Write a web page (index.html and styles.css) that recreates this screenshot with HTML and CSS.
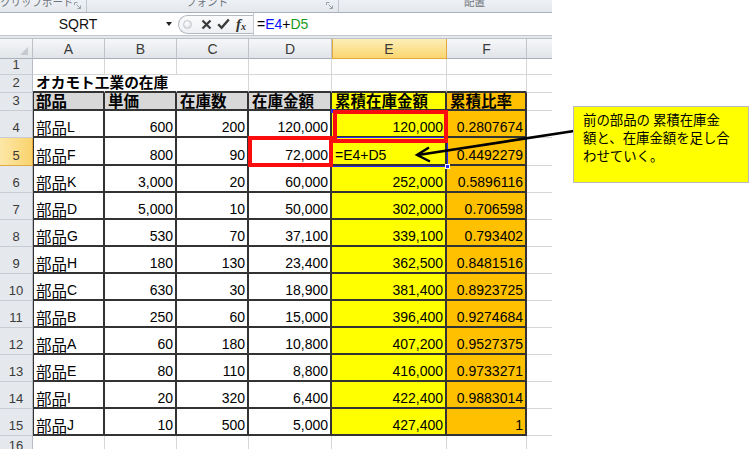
FILE: index.html
```html
<!DOCTYPE html>
<html lang="ja">
<head>
<meta charset="utf-8">
<title>在庫</title>
<link rel="stylesheet" href="styles.css">
</head>
<body>
<div class="page">
  <div class="excel">
    <div class="ribbon">
      <div class="group g1"><span class="glabel">クリップボード</span><span class="launch"><svg width="7" height="7" viewBox="0 0 7 7"><path d="M0.5 3V0.5H3.5M6.5 6.5L2.5 2.5M6.5 3.5V6.5H3.5" stroke="#9aa0a8" stroke-width="1" fill="none"/></svg></span></div>
      <div class="group g2"><span class="glabel">フォント</span><span class="launch"><svg width="7" height="7" viewBox="0 0 7 7"><path d="M0.5 3V0.5H3.5M6.5 6.5L2.5 2.5M6.5 3.5V6.5H3.5" stroke="#9aa0a8" stroke-width="1" fill="none"/></svg></span></div>
      <div class="group g3"><span class="glabel">配置</span></div>
    </div>
    <div class="fbar">
      <div class="namebox"><span class="nbtext">SQRT</span><span class="nbarrow"></span></div>
      <div class="fxarea">
        <div class="pill">
          <span class="knob"></span>
          <svg class="ico" width="11" height="11" viewBox="0 0 11 11"><path d="M1.5 1.5L9.5 9.5M9.5 1.5L1.5 9.5" stroke="#3a3a3a" stroke-width="2.2"/></svg>
          <svg class="ico" width="13" height="12" viewBox="0 0 13 12"><path d="M1.2 6.2L4.6 9.8L11.8 1.5" stroke="#3a3a3a" stroke-width="2.4" fill="none"/></svg>
          <span class="fx">f<span class="fxx">x</span></span>
        </div>
      </div>
      <div class="formula">=<span class="ref-b">E4</span>+<span class="ref-g">D5</span></div>
    </div>
    <div class="fgap"></div>
    <div class="sheet">
      <div class="corner"><span class="tri"></span></div>
      <div class="ch">A</div><div class="ch">B</div><div class="ch">C</div><div class="ch">D</div><div class="ch sel">E</div><div class="ch">F</div><div class="ch last"></div>

      <div class="rh">1</div>
      <div class="c"></div><div class="c"></div><div class="c"></div><div class="c"></div><div class="c"></div><div class="c"></div><div class="c g"></div>

      <div class="rh">2</div>
      <div class="c ab nr"><span class="j b title">オカモト工業の在庫</span></div><div class="c ab nr"></div><div class="c ab"></div><div class="c ab"></div><div class="c ab"></div><div class="c ab"></div><div class="c g"></div>

      <div class="rh">3</div>
      <div class="c t ta gray"><span class="j b">部品</span></div><div class="c t gray"><span class="j b">単価</span></div><div class="c t gray"><span class="j b">在庫数</span></div><div class="c t gray"><span class="j b">在庫金額</span></div><div class="c t y"><span class="j b">累積在庫金額</span></div><div class="c t o"><span class="j b">累積比率</span></div><div class="c g"></div>

      <div class="rh">4</div>
      <div class="c t ta"><span class="j">部品</span>L</div><div class="c t r">600</div><div class="c t r">200</div><div class="c t r">120,000</div><div class="c t r y">120,000</div><div class="c t r o">0.2807674</div><div class="c g"></div>

      <div class="rh sel">5</div>
      <div class="c t ta"><span class="j">部品</span>F</div><div class="c t r">800</div><div class="c t r">90</div><div class="c t r">72,000</div><div class="c t y">=E4+D5</div><div class="c t r o">0.4492279</div><div class="c g"></div>

      <div class="rh">6</div>
      <div class="c t ta"><span class="j">部品</span>K</div><div class="c t r">3,000</div><div class="c t r">20</div><div class="c t r">60,000</div><div class="c t r y">252,000</div><div class="c t r o">0.5896116</div><div class="c g"></div>

      <div class="rh">7</div>
      <div class="c t ta"><span class="j">部品</span>D</div><div class="c t r">5,000</div><div class="c t r">10</div><div class="c t r">50,000</div><div class="c t r y">302,000</div><div class="c t r o">0.706598</div><div class="c g"></div>

      <div class="rh">8</div>
      <div class="c t ta"><span class="j">部品</span>G</div><div class="c t r">530</div><div class="c t r">70</div><div class="c t r">37,100</div><div class="c t r y">339,100</div><div class="c t r o">0.793402</div><div class="c g"></div>

      <div class="rh">9</div>
      <div class="c t ta"><span class="j">部品</span>H</div><div class="c t r">180</div><div class="c t r">130</div><div class="c t r">23,400</div><div class="c t r y">362,500</div><div class="c t r o">0.8481516</div><div class="c g"></div>

      <div class="rh">10</div>
      <div class="c t ta"><span class="j">部品</span>C</div><div class="c t r">630</div><div class="c t r">30</div><div class="c t r">18,900</div><div class="c t r y">381,400</div><div class="c t r o">0.8923725</div><div class="c g"></div>

      <div class="rh">11</div>
      <div class="c t ta"><span class="j">部品</span>B</div><div class="c t r">250</div><div class="c t r">60</div><div class="c t r">15,000</div><div class="c t r y">396,400</div><div class="c t r o">0.9274684</div><div class="c g"></div>

      <div class="rh">12</div>
      <div class="c t ta"><span class="j">部品</span>A</div><div class="c t r">60</div><div class="c t r">180</div><div class="c t r">10,800</div><div class="c t r y">407,200</div><div class="c t r o">0.9527375</div><div class="c g"></div>

      <div class="rh">13</div>
      <div class="c t ta"><span class="j">部品</span>E</div><div class="c t r">80</div><div class="c t r">110</div><div class="c t r">8,800</div><div class="c t r y">416,000</div><div class="c t r o">0.9733271</div><div class="c g"></div>

      <div class="rh">14</div>
      <div class="c t ta"><span class="j">部品</span>I</div><div class="c t r">20</div><div class="c t r">320</div><div class="c t r">6,400</div><div class="c t r y">422,400</div><div class="c t r o">0.9883014</div><div class="c g"></div>

      <div class="rh">15</div>
      <div class="c t ta"><span class="j">部品</span>J</div><div class="c t r">10</div><div class="c t r">500</div><div class="c t r">5,000</div><div class="c t r y">427,400</div><div class="c t r o">1</div><div class="c g"></div>

      <div class="rh">16</div>
      <div class="c"></div><div class="c"></div><div class="c"></div><div class="c"></div><div class="c"></div><div class="c"></div><div class="c g"></div>

      <div class="hl-blue-e4"><span class="dot dot-tl"></span></div>
      <div class="hl-blue-e5"><span class="handle"></span></div>
      <div class="hl-green-d5"></div>
      <div class="redbox red-e4"></div>
      <div class="redbox red-d5"></div>
    </div>
  </div>

  <svg class="arrow" width="750" height="449" viewBox="0 0 750 449">
    <path d="M574 131L418 155" stroke="#000" stroke-width="2.6" fill="none"/>
    <path d="M429 147.5L417 155L430 161.5" stroke="#000" stroke-width="2.4" fill="none" stroke-linejoin="miter"/>
  </svg>

  <div class="callout">前の部品の 累積在庫金<br>額と、在庫金額を足し合<br>わせていく。</div>
</div>
</body>
</html>
```

FILE: styles.css
```css
* { box-sizing: border-box; }

body {
  margin: 0;
  background: #ffffff;
  font-family: "Liberation Sans", "Noto Sans CJK JP", sans-serif;
  color: #000;
}

.page {
  position: relative;
  width: 750px;
  height: 449px;
  overflow: hidden;
}

.excel {
  width: 552px;
}

/* ribbon strip */
.ribbon {
  display: flex;
  height: 13px;
  background: linear-gradient(#edf0f4, #e4e8ed);
  border-bottom: 1px solid #a9b0b9;
  overflow: hidden;
}

.group {
  display: flex;
  align-items: flex-start;
  border-right: 1px solid #c2c7ce;
  height: 12px;
}

.g1 { width: 87px; padding-left: 0; }
.g2 { width: 252px; padding-left: 99px; }
.g3 { width: 213px; padding-left: 125px; border-right: none; }

.glabel {
  font-family: "Noto Sans CJK JP", sans-serif;
  font-size: 10.5px;
  line-height: 12px;
  margin-top: -4px;
  color: #6f757c;
  white-space: nowrap;
}

.launch {
  margin-left: auto;
  margin-right: 5px;
  margin-top: 2px;
  display: flex;
}

/* formula bar */
.fbar {
  display: flex;
  height: 23px;
  background: #ffffff;
  border-bottom: 1px solid #c3c8cf;
}

.namebox {
  width: 175px;
  display: flex;
  align-items: center;
}

.nbtext {
  width: 156px;
  text-align: center;
  font-size: 14px;
  color: #111;
}

.nbarrow {
  margin-left: 10px;
  width: 0;
  height: 0;
  border-left: 3px solid transparent;
  border-right: 3px solid transparent;
  border-top: 4px solid #222;
}

.fxarea {
  width: 78px;
  display: flex;
  align-items: center;
  padding-left: 3px;
}

.pill {
  flex: 1;
  height: 19px;
  display: flex;
  align-items: center;
  border: 1px solid #b3b9c2;
  border-right: none;
  border-radius: 10px 0 0 10px;
  background: linear-gradient(#fbfbfc, #eef0f3);
  padding-left: 4px;
}

.knob {
  width: 9px;
  height: 9px;
  border-radius: 50%;
  border: 1px solid #c3c7cd;
  background: radial-gradient(circle at 40% 35%, #ffffff, #d4d7dc);
  margin-right: 9px;
}

.ico { margin-right: 5px; }

.fx {
  font-family: "Liberation Serif", serif;
  font-style: italic;
  font-weight: bold;
  font-size: 15px;
  color: #333;
  line-height: 1;
  margin-left: 1px;
}

.fxx {
  font-size: 10px;
  vertical-align: -1px;
}

.formula {
  flex: 1;
  border-left: 1px solid #c3c8cf;
  padding-left: 3px;
  display: flex;
  align-items: center;
  font-size: 14px;
  color: #000;
}

.ref-b { color: #0a14ff; }
.ref-g { color: #1a9a1a; }

.fgap {
  height: 3px;
  background: #e4e7eb;
  border-bottom: 1px solid #bcc1c8;
}

/* sheet grid */
.sheet {
  position: relative;
  display: grid;
  grid-template-columns: 33px 72px 72px 72px 83px 115px 80px 25px;
  grid-template-rows: 20px 16px 18px 18px 27px 28px repeat(10, 27px) 20px;
  background: #ffffff;
}

.corner {
  background: linear-gradient(#f5f6f8, #e2e5e9);
  border-right: 1px solid #bcc1c8;
  border-bottom: 1px solid #abb1b9;
  display: flex;
  justify-content: flex-end;
  align-items: flex-end;
  padding: 0 4px 3px 0;
}

.tri {
  width: 0;
  height: 0;
  border-left: 8px solid transparent;
  border-bottom: 8px solid #c6cad0;
}

.ch {
  background: linear-gradient(#f6f7f9, #e1e4e8);
  border-right: 1px solid #bfc4cb;
  border-bottom: 1px solid #a9afb8;
  display: flex;
  align-items: center;
  justify-content: center;
  font-size: 14px;
  color: #3a3a3a;
  padding-top: 1px;
}

.ch.sel {
  background: linear-gradient(#fdeeb8, #fad66f);
  border-right: 1px solid #e3a93e;
  border-bottom: 1px solid #e3a93e;
  box-shadow: inset 1px 0 0 #e3a93e;
}

.ch.last { border-right: none; }

.rh {
  background: #e5e8ec;
  border-right: 1px solid #b8bdc5;
  border-bottom: 1px solid #c9cdd3;
  display: flex;
  align-items: flex-end;
  justify-content: center;
  font-size: 13px;
  line-height: 15px;
  color: #3a3a3a;
  padding-bottom: 2px;
}

.rh.sel {
  background: linear-gradient(90deg, #fde7a8, #f9d36c);
  border-bottom: 1px solid #e3a93e;
  border-right: 1px solid #e3a93e;
}

.c {
  border-right: 1px solid #d6d6d6;
  border-bottom: 1px solid #d6d6d6;
  display: flex;
  align-items: flex-end;
  padding: 0 2px 1px 3px;
  font-size: 14px;
  line-height: 16px;
  white-space: nowrap;
  min-width: 0;
  overflow: visible;
}

.c.g { border-right: none; }
.c.nr { border-right-color: transparent; }
.c.ab { border-bottom: 2px solid #333333; }

.c.t {
  border-right: 2px solid #333333;
  border-bottom: 2px solid #333333;
}

.c.ta { box-shadow: inset 1px 0 0 #333333; }

.c.r { justify-content: flex-end; }

.c.gray { background: #d8d8d8; }
.c.y { background: #ffff00; }
.c.o { background: #ffc000; }

.j {
  font-family: "Noto Sans CJK JP", sans-serif;
  font-size: 15.5px;
  line-height: 16px;
}

.title {
  font-size: 14.7px;
  position: relative;
  z-index: 1;
}

.b { font-weight: bold; }

/* range highlights and annotation boxes (overlays) */
.hl-blue-e4 {
  position: absolute;
  left: 332px;
  top: 71px;
  width: 116px;
  height: 28px;
  border-bottom: 1px solid #2a2aff;
}

.dot {
  position: absolute;
  width: 4px;
  height: 4px;
  background: #2a2aff;
}

.dot-tl { left: -1px; top: -1px; }

.hl-blue-e5 {
  position: absolute;
  left: 332px;
  top: 99px;
  width: 116px;
  height: 29px;
  border-right: 1px solid #2a2aff;
  border-bottom: 1px solid #2a2aff;
}

.handle {
  position: absolute;
  right: -3px;
  bottom: -3px;
  width: 5px;
  height: 5px;
  background: #2a2aff;
  border: 1px solid #fff;
}

.hl-green-d5 {
  position: absolute;
  left: 248px;
  top: 98px;
  width: 85px;
  height: 29px;
  border: 1px solid #1a9a1a;
}

.redbox {
  position: absolute;
  border: 4px solid #fb0d0d;
}

.red-e4 { left: 333px; top: 71px; width: 115px; height: 33px; }
.red-d5 { left: 248px; top: 97px; width: 85px; height: 31px; }

.arrow {
  position: absolute;
  left: 0;
  top: 0;
  pointer-events: none;
}

.callout {
  position: absolute;
  left: 573px;
  top: 106px;
  width: 176px;
  height: 77px;
  background: #ffff00;
  border: 1px solid #b9b9b9;
  padding: 3px 0 0 9px;
  font-family: "Noto Sans CJK JP", sans-serif;
  font-size: 13.4px;
  line-height: 18px;
  white-space: nowrap;
  color: #000;
}
```
